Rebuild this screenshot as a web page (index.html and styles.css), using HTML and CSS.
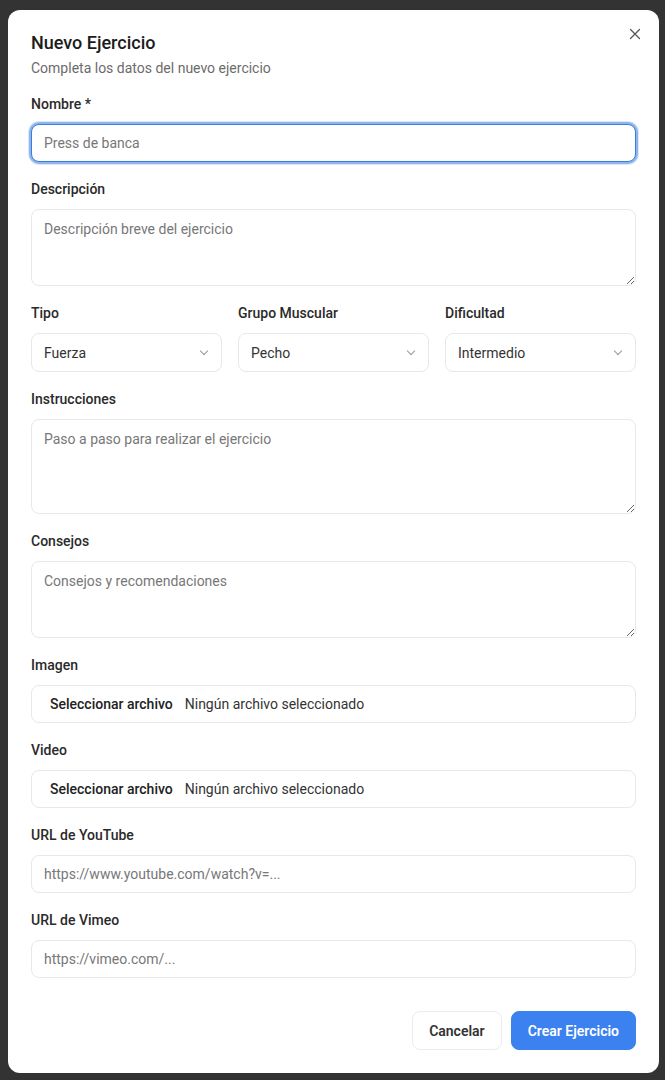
FILE: index.html
```html
<!DOCTYPE html>
<html lang="es">
<head>
  <meta charset="UTF-8">
  <meta name="viewport" content="width=device-width, initial-scale=1.0">
  <title>Nuevo Ejercicio</title>
  <link rel="stylesheet" href="styles.css">
</head>
<body>
  <div class="dialog">
    <button class="close" aria-label="Cerrar">
      <svg width="12" height="12" viewBox="0 0 12 12"><path d="M1.5 1.5l9 9M10.5 1.5l-9 9" stroke="#555" stroke-width="1.3" stroke-linecap="round"/></svg>
    </button>

    <h2>Nuevo Ejercicio</h2>
    <p class="sub">Completa los datos del nuevo ejercicio</p>

    <div class="field">
      <label for="nombre">Nombre *</label>
      <input type="text" id="nombre" class="input focused" placeholder="Press de banca">
    </div>

    <div class="field">
      <label for="desc">Descripción</label>
      <textarea id="desc" class="input area" placeholder="Descripción breve del ejercicio"></textarea>
    </div>

    <div class="row">
      <div class="field">
        <label>Tipo</label>
        <div class="select">Fuerza <span class="chev"></span></div>
      </div>
      <div class="field">
        <label>Grupo Muscular</label>
        <div class="select">Pecho <span class="chev"></span></div>
      </div>
      <div class="field">
        <label>Dificultad</label>
        <div class="select">Intermedio <span class="chev"></span></div>
      </div>
    </div>

    <div class="field">
      <label for="instr">Instrucciones</label>
      <textarea id="instr" class="input area tall" placeholder="Paso a paso para realizar el ejercicio"></textarea>
    </div>

    <div class="field">
      <label for="tips">Consejos</label>
      <textarea id="tips" class="input area" placeholder="Consejos y recomendaciones"></textarea>
    </div>

    <div class="field">
      <label>Imagen</label>
      <div class="input file"><span class="file-btn">Seleccionar archivo</span><span>Ningún archivo seleccionado</span></div>
    </div>

    <div class="field">
      <label>Video</label>
      <div class="input file"><span class="file-btn">Seleccionar archivo</span><span>Ningún archivo seleccionado</span></div>
    </div>

    <div class="field">
      <label for="yt">URL de YouTube</label>
      <input type="text" id="yt" class="input" placeholder="https://www.youtube.com/watch?v=...">
    </div>

    <div class="field">
      <label for="vimeo">URL de Vimeo</label>
      <input type="text" id="vimeo" class="input" placeholder="https://vimeo.com/...">
    </div>

    <div class="actions">
      <button class="btn">Cancelar</button>
      <button class="btn primary">Crear Ejercicio</button>
    </div>
  </div>
</body>
</html>
```

FILE: styles.css
```css
* { box-sizing: border-box; }
body { margin: 0; padding: 10px 6px 7px 8px; background: #333; font-family: Roboto, "Liberation Sans", sans-serif; color: #222; }
.dialog { position: relative; background: #fff; border-radius: 12px; padding: 21px 23px 23px 23px; }
.close { position: absolute; top: 18px; right: 18px; background: none; border: none; padding: 0; width: 12px; height: 12px; cursor: pointer; }
.close svg { display: block; }
h2 { font-size: 18px; font-weight: 500; line-height: 24px; margin: 0; color: #1c1c1c; }
.sub { font-size: 14px; line-height: 20px; margin: 3px 0 16px; color: #6b6b6b; }
.field { margin-bottom: 17px; }
label { display: block; font-size: 14px; font-weight: 500; line-height: 20px; margin-bottom: 10px; color: #2a2a2a; }
.input { display: block; width: 100%; height: 38px; padding: 0 12px; border: 1px solid #e8e8e8; border-radius: 8px; font-family: inherit; font-size: 14px; color: #333; background: #fff; outline: none; }
.input::placeholder { color: #777; }
.focused { border-color: #3b7ddb; box-shadow: 0 0 0 2px rgba(80,140,225,0.55), 0 0 0 3px rgba(80,140,225,0.2); }
.area { height: 77px; padding: 10px 12px; resize: vertical; line-height: 18px; }
.tall { height: 95px; }
.row { display: grid; grid-template-columns: 1fr 1fr 1fr; gap: 16px; }
.select { display: flex; align-items: center; justify-content: space-between; height: 39px; padding: 0 14px 0 12px; border: 1px solid #e8e8e8; border-radius: 8px; font-size: 14px; color: #333; }
.chev { width: 6px; height: 6px; border-right: 1.3px solid #999; border-bottom: 1.3px solid #999; transform: rotate(45deg); margin-top: -4px; }
.file { display: flex; align-items: center; gap: 12px; padding-left: 18px; font-size: 14px; color: #333; }
.file-btn { font-weight: 500; color: #222; }
.actions { display: flex; justify-content: flex-end; gap: 9px; margin-top: 33px; }
.btn { height: 39px; padding: 0 16px; border: 1px solid #ececec; border-radius: 8px; background: #fff; font-family: inherit; font-size: 14px; font-weight: 600; color: #333; cursor: pointer; }
.primary { background: #3b82f0; border-color: #3b82f0; color: #fff; }
```
